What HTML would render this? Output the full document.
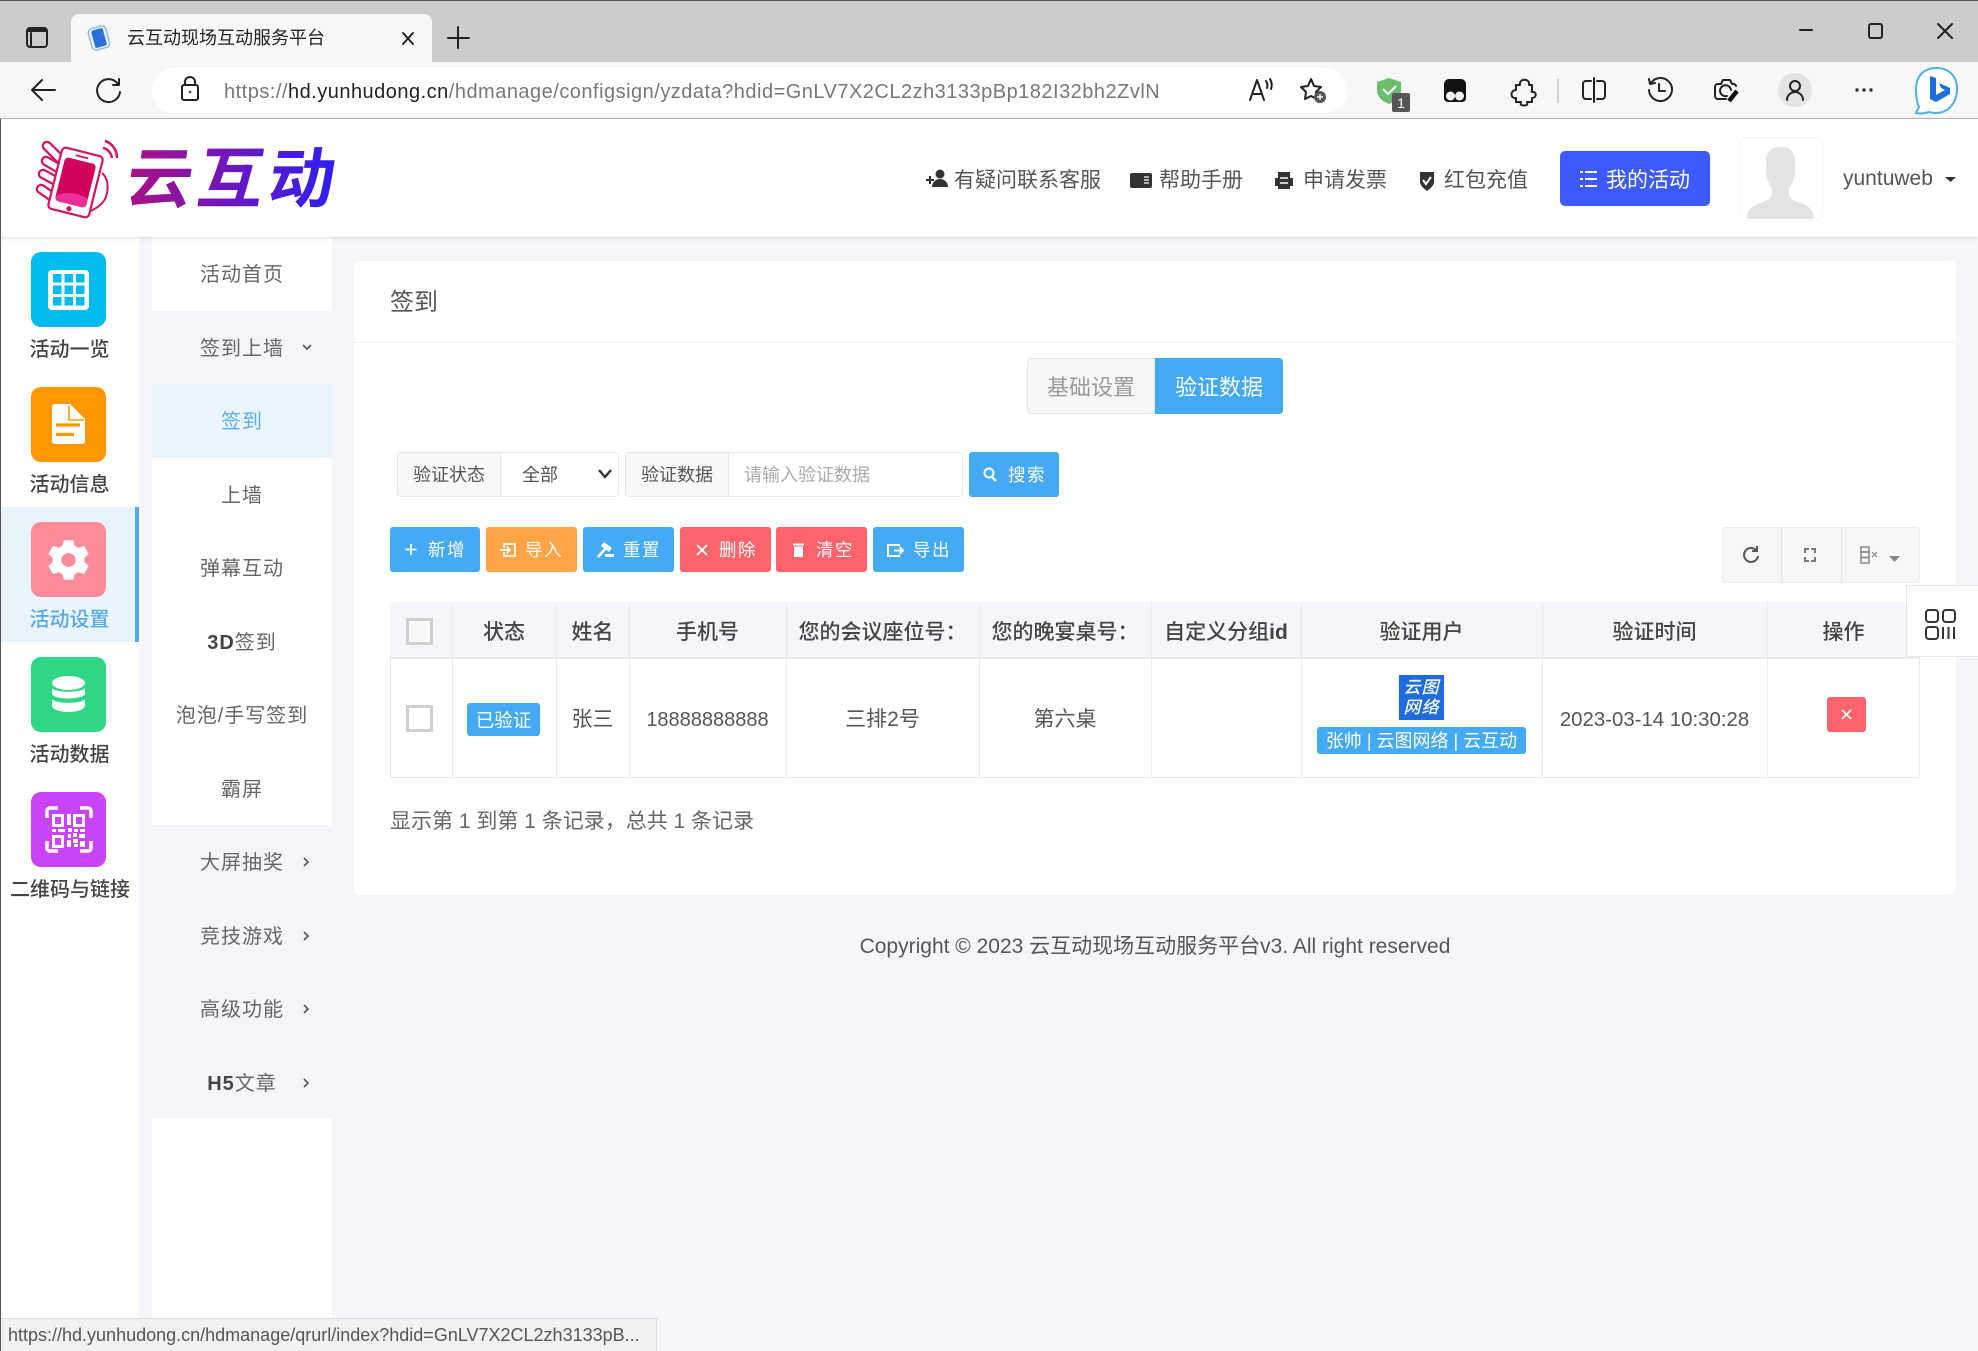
<!DOCTYPE html>
<html lang="zh-CN">
<head>
<meta charset="utf-8">
<title>云互动现场互动服务平台</title>
<style>
*{box-sizing:border-box}
html,body{margin:0;padding:0;width:1978px;height:1351px;overflow:hidden;background:#f4f6fa}
body{position:relative;font-family:"Liberation Sans","Noto Sans CJK SC",sans-serif;color:#555}
.b{position:absolute}
.t{position:absolute;white-space:nowrap;text-align:center;transform:translateY(2px)}
svg{position:absolute;overflow:visible}
.btn{position:absolute;top:527px;height:45px;border-radius:3px;color:#fff;font-size:17.500px;letter-spacing:1.500px;line-height:45px;white-space:nowrap}
.btn span{position:absolute;top:1px}
.btn svg{top:0;left:0}
.n1{left:0;width:139px;height:30px;line-height:30px;font-size:20px;font-weight:500;color:#444}
.n2{left:152px;width:180px;height:73.5px;line-height:73.5px;font-size:20px;letter-spacing:1px;color:#666}
.hd{top:602px;height:57px;line-height:57px;font-size:21px;font-weight:500;color:#444}
.td{top:659px;height:118px;line-height:118px;font-size:21px;color:#555}
.ln{position:absolute;width:1px;background:#eaecef;top:602px;height:176px}
.hl{position:absolute;top:166px;font-size:21px;height:30px;line-height:30px;color:#555;white-space:nowrap}
.i{fill:none;stroke:#222;stroke-width:2;stroke-linecap:round;stroke-linejoin:round}
</style>
</head>
<body>
<!-- browser chrome -->
<div class="b" style="left:0;top:0;width:1978px;height:62px;background:#cccccc;border-top:1px solid #555"></div>
<div class="b" style="left:71px;top:14px;width:361px;height:48px;background:#f7f7f7;border-radius:8px 8px 0 0"></div>
<div class="b" style="left:0;top:62px;width:1978px;height:57px;background:#f7f7f7;border-bottom:1px solid #bbb"></div>
<div class="b" style="left:152px;top:68px;width:1195px;height:45px;background:#fff;border-radius:23px"></div>

<svg style="left:0;top:0" width="1978" height="119" viewBox="0 0 1978 119">
 <!-- sidebar toggle -->
 <rect class="i" x="27" y="28" width="20" height="19" rx="3" stroke-width="2"/>
 <path d="M27 32h20v-1a3 3 0 0 0-3-3H30a3 3 0 0 0-3 3z" fill="#222"/><path class="i" d="M31 33v13"/>
 <!-- favicon -->
 <g transform="rotate(-15 99 38)"><rect x="93" y="29" width="12" height="18" rx="2" fill="#2a6fdb"/><rect x="90" y="27" width="18" height="22" rx="4" fill="none" stroke="#8fb8ea" stroke-width="1.5"/></g>
 <!-- close, new tab -->
 <path class="i" d="M403 33l10 11M413 33l-10 11" stroke-width="1.8"/>
 <path class="i" d="M458 27v21M448 38h21" stroke-width="1.8"/>
 <!-- back / refresh / lock -->
 <path class="i" d="M55 90H32M42 80L32 90l10 10" stroke-width="2"/>
 <path class="i" d="M118 84a11.500 11.500 0 1 0 2 8M119 79v6h-6" stroke-width="2"/>
 <rect class="i" x="182" y="85" width="16" height="15" rx="2" stroke="#555" stroke-width="1.5"/><path class="i" d="M185 85v-3a5 5 0 0 1 10 0v3" stroke="#555" stroke-width="1.5"/><circle cx="190" cy="92" r="1.400" fill="#555"/>
 <!-- read aloud / favorite -->
 <path class="i" d="M1250 100l7-20 7 20M1253 94h8" stroke="#777" stroke-width="1.300"/><path class="i" d="M1266 81a8 8 0 0 1 1 7M1270 79a12 12 0 0 1 1 10" stroke="#777" stroke-width="1.200"/>
 <path class="i" d="M1311 79l3 7 7 1-5 5 1 7-6-3-6 3 1-7-5-5 7-1z" stroke="#666" stroke-width="1.300"/><circle cx="1320" cy="97" r="6" fill="#555"/><path d="M1320 94v6M1317 97h6" stroke="#fff" stroke-width="1.400"/>
 <!-- shield ext -->
 <path d="M1389 78l12 4v8c0 7-5 11-12 14-7-3-12-7-12-14v-8z" fill="#6bbf6b"/><path d="M1383 89l5 5 8-8" fill="none" stroke="#fff" stroke-width="2"/>
 <rect x="1392" y="93" width="18" height="19" rx="2" fill="#555"/><text x="1401" y="108" font-size="14" fill="#fff" text-anchor="middle" font-family="Liberation Sans">1</text>
 <!-- tampermonkey -->
 <path d="M1444 84a5 5 0 0 1 5-5h12a5 5 0 0 1 5 5v14a4 4 0 0 1-4 4h-14a4 4 0 0 1-4-4z" fill="#111"/><circle cx="1450.500" cy="96" r="4.500" fill="#f2f2f2"/><circle cx="1459.500" cy="96" r="4.500" fill="#f2f2f2"/>
 <!-- puzzle -->
 <path class="i" d="M1516 85h4c-1.500-7 10.500-7 9 0h3v5c-.5 1.500-.5 2 0 0v2c5-1 5 6 0 6v4h-5c1 3-.5 3.500-3 3.500s-4-.5-3-3.500h-5v-4c-6 1-6-8 0-8z" stroke-width="1.700"/>
 <path d="M1558 79v24" stroke="#cfcfcf" stroke-width="2"/>
 <!-- split -->
 <path class="i" d="M1591 81h-5a3 3 0 0 0-3 3v12a3 3 0 0 0 3 3h5M1597 81h5a3 3 0 0 1 3 3v12a3 3 0 0 1-3 3h-5M1594 78v24" stroke-width="1.700"/>
 <!-- history -->
 <path class="i" d="M1651 83a11.500 11.500 0 1 1-2 7M1649 79l1 5 5-1M1659 84v7h6" stroke-width="1.700"/>
 <!-- camera -->
 <path class="i" d="M1726 99h-8a3 3 0 0 1-3-3V87a3 3 0 0 1 3-3h3l2-4h7l2 4h2a3 3 0 0 1 2 2M1731 90a5.500 5.500 0 1 0-4 6" stroke-width="1.700"/><path d="M1729 101l8-10" stroke="#111" stroke-width="4.500"/>
 <!-- profile -->
 <circle cx="1795" cy="90" r="17" fill="#e3e3e3"/><circle cx="1795" cy="86" r="5" class="i" stroke="#333" stroke-width="1.300"/><path class="i" d="M1787 100a8 8 0 0 1 16 0" stroke="#333" stroke-width="1.300"/>
 <circle cx="1857" cy="90" r="1.700" fill="#333"/><circle cx="1864" cy="90" r="1.700" fill="#333"/><circle cx="1871" cy="90" r="1.700" fill="#333"/>
 <!-- bing -->
 <path d="M1936 68c-12 0-20 8-20 21 0 8 1 14 3 18l-3 6c5 1 10 0 13-1 3 1 5 1 7 1 12 0 21-10 21-24s-9-21-21-21z" fill="#fff" stroke="#4fb0ee" stroke-width="2"/>
 <path d="M1930 76l6 2v17l9-5-4-2-2-5 11 5v6l-14 8-6-3z" fill="#1c6fd8"/>
 <!-- window -->
 <path class="i" d="M1800 30h12" stroke-width="1.300" stroke="#333"/><rect class="i" x="1869" y="24" width="13" height="14" rx="2" stroke="#333" stroke-width="1.300"/><path class="i" d="M1938 24l14 14M1952 24l-14 14" stroke="#333" stroke-width="1.300"/>
</svg>
<div class="t" style="left:127px;top:24px;width:200px;height:28px;line-height:28px;font-size:18px;color:#222;text-align:left;transform:none">云互动现场互动服务平台</div>
<div class="t" style="left:224px;top:76px;height:28px;line-height:28px;font-size:20px;color:#777;text-align:left;letter-spacing:.49px">https://<span style="color:#222">hd.yunhudong.cn</span>/hdmanage/configsign/yzdata?hdid=GnLV7X2CL2zh3133pBp182I32bh2ZvlN</div>

<!-- page header -->
<div class="b" style="left:0;top:119px;width:1978px;height:118px;background:#fff;box-shadow:0 1px 4px rgba(0,0,0,.15);z-index:3"></div>
<div style="position:absolute;left:0;top:0;z-index:4">
<svg style="left:0;top:0" width="1978" height="240" viewBox="0 0 1978 240">
 <defs><linearGradient id="lg" x1="0" x2="210" y1="0" y2="0" gradientUnits="userSpaceOnUse"><stop offset="0" stop-color="#ad1184"/><stop offset=".5" stop-color="#6a17c0"/><stop offset="1" stop-color="#2a1ff5"/></linearGradient></defs>
 <!-- logo hand and phone -->
 <path d="M102 173c6 5 7 14 4 24-3 7-10 12-18 15" fill="none" stroke="#d6135f" stroke-width="2"/>
 <g stroke-linecap="round" fill="none">
  <g stroke="#d6135f" stroke-width="10.500"><path d="M47 146l12 12"/><path d="M46 161l12 7"/><path d="M43 174l13 7"/><path d="M41 189l13 9"/></g>
  <g stroke="#fff" stroke-width="6"><path d="M47 146l12 12"/><path d="M46 161l12 7"/><path d="M43 174l13 7"/><path d="M41 189l13 9"/></g>
 </g>
 <g transform="rotate(14 75.500 182.500)">
  <rect x="54.500" y="151" width="42" height="63" rx="4" fill="#fff" stroke="#d6135f" stroke-width="2.200"/>
  <rect x="59.500" y="160" width="32" height="45" rx="4" fill="#d1045a"/>
  <path d="M69 156h13" stroke="#d6135f" stroke-width="1.800"/><circle cx="75.500" cy="209.500" r="2.600" fill="#d6135f"/>
  <path d="M59.500 201c6-8 20-9 32-6v6a4 4 0 0 1-4 4h-24a4 4 0 0 1-4-4z" fill="#ec2f96"/>
 </g>
 <path d="M105 141c7 2 12 9 12 17M103 148c5 1 8 5 9 10" fill="none" stroke="#d6135f" stroke-width="2.500"/>
 <text transform="translate(124 202) skewX(-8)" font-family="Noto Sans CJK SC" font-weight="700" font-size="66" letter-spacing="5" fill="url(#lg)">云互动</text>
 <!-- header icons -->
 <g fill="#333">
  <circle cx="940" cy="174" r="4.500"/><path d="M932 187c0-5 4-8 8-8s8 3 8 8z"/><path d="M926 179h8v2h-8zM929 176h2v8h-2z"/>
  <path d="M1132 173h18a2 2 0 0 1 2 2v11a2 2 0 0 1-2 2h-18a2 2 0 0 1-2-2v-11a2 2 0 0 1 2-2z"/>
  <path d="M1278 178v-6h12v6h3v8h-3v3h-12v-3h-3v-8z"/>
  <path d="M1420 172h14v10c0 3-3 6-7 9-4-3-7-6-7-9z"/>
 </g>
 <path d="M1144 177h5M1144 180h5M1144 183h5" stroke="#fff" stroke-width="1.200"/>
 <path d="M1280 178h8M1280 183h8" stroke="#fff" stroke-width="1.500"/>
 <path d="M1423 180l3 4 5-7" fill="none" stroke="#fff" stroke-width="2"/>
 <path d="M1945 177h11l-5.500 5z" fill="#333"/>
</svg>
</div>
<div class="hl" style="left:954px;z-index:5">有疑问联系客服</div>
<div class="hl" style="left:1159px;z-index:5">帮助手册</div>
<div class="hl" style="left:1303px;z-index:5">申请发票</div>
<div class="hl" style="left:1444px;z-index:5">红包充值</div>
<div class="b" style="left:1560px;top:151px;width:150px;height:55px;background:#3d5afe;border-radius:5px;z-index:5"></div>
<svg style="left:1560px;top:151px;z-index:6" width="150" height="55"><path d="M25 21h12M25 28h12M25 35h12" stroke="#fff" stroke-width="2"/><path d="M20 21h3M20 28h3M20 35h3" stroke="#fff" stroke-width="2"/></svg>
<div class="t" style="left:1606px;top:164px;font-size:21px;line-height:30px;height:30px;color:#fff;z-index:6">我的活动</div>
<div class="b" style="left:1739px;top:137px;width:84px;height:84px;border:1px solid #f5f5f5;border-radius:8px;z-index:5;background:#fff"></div>
<svg style="left:1741px;top:137px;z-index:6" width="82" height="84"><path d="M39 10c10 0 15 5 15 14v12c0 7-4 12-6 15v6c0 4 5 7 14 10 8 3 11 8 11 15H6c0-7 3-12 11-15 9-3 14-6 14-10v-6c-2-3-6-8-6-15V24c0-9 5-14 14-14z" fill="#e3e3e3"/></svg>
<div class="t" style="left:1843px;top:162px;font-size:21px;line-height:30px;height:30px;color:#555;z-index:6">yuntuweb</div>

<!-- sidebars -->
<div class="b" style="left:0;top:237px;width:139px;height:1114px;background:#fff"></div>
<div class="b" style="left:0;top:119px;width:1px;height:1232px;background:#555;z-index:9"></div>
<div class="b" style="left:0;top:507px;width:139px;height:135px;background:#eaf4fd;border-right:4px solid #55a8ee"></div>

<svg style="left:31px;top:252px" width="75" height="75"><rect width="75" height="75" rx="10" fill="#00bcf1"/><rect x="17" y="18" width="41" height="40" rx="4" fill="#fff"/><g fill="#00bcf1"><rect x="22" y="22" width="8.500" height="8.500"/><rect x="33.500" y="22" width="8.500" height="8.500"/><rect x="45" y="22" width="8.500" height="8.500"/><rect x="22" y="33.500" width="8.500" height="8.500"/><rect x="33.500" y="33.500" width="8.500" height="8.500"/><rect x="45" y="33.500" width="8.500" height="8.500"/><rect x="22" y="45" width="8.500" height="8.500"/><rect x="33.500" y="45" width="8.500" height="8.500"/><rect x="45" y="45" width="8.500" height="8.500"/></g></svg>
<div class="t n1" style="top:333px">活动一览</div>

<svg style="left:31px;top:387px" width="75" height="75"><rect width="75" height="75" rx="10" fill="#ff9800"/><path d="M24 17h15l15 15v22a3 3 0 0 1-3 3H24a3 3 0 0 1-3-3V20a3 3 0 0 1 3-3z" fill="#fff"/><path d="M38 18.500V33h15" fill="none" stroke="#ff9800" stroke-width="1.600"/><path d="M25 38h24M25 47.500h18" stroke="#ff9800" stroke-width="3.200"/></svg>
<div class="t n1" style="top:468px">活动信息</div>

<svg style="left:31px;top:522px" width="75" height="75"><rect width="75" height="75" rx="10" fill="#ff8a9a"/><g transform="translate(37.500 38) scale(.72) translate(-37.500 -37.500)"><path fill="#fff" fill-rule="evenodd" d="M31 10h13l2 8 5 2.500 8-2.500 6.500 11-6 5.500v6l6 5.500-6.500 11-8-2.500-5 2.500-2 8H31l-2-8-5-2.500-8 2.500-6.500-11 6-5.500v-6l-6-5.500 6.500-11 8 2.500 5-2.500zM37.500 28a10 9.500 0 1 0 .01 0z"/></g></svg>
<div class="t n1" style="top:603px;color:#55a8ee">活动设置</div>

<svg style="left:31px;top:657px" width="75" height="75"><rect width="75" height="75" rx="10" fill="#2fd684"/><ellipse cx="37.500" cy="26" rx="16.500" ry="7" fill="#fff"/><path d="M21 31c3 5 30 5 33 0v6c-2 6-31 6-33 0zM21 42c3 5 30 5 33 0v7c-2 8-31 8-33 0z" fill="#fff"/></svg>
<div class="t n1" style="top:738px">活动数据</div>

<svg style="left:31px;top:792px" width="75" height="75"><rect width="75" height="75" rx="10" fill="#c944f6"/><path d="M16 26v-7a3 3 0 0 1 3-3h8M60 26v-7a3 3 0 0 0-3-3h-8M16 49v7a3 3 0 0 0 3 3h8M60 49v7a3 3 0 0 1-3 3h-8" fill="none" stroke="#fff" stroke-width="3.500"/><path d="M22.500 23.500h9v10h-9zM43.500 23.500h9v10h-9zM22.500 44.500h9v10h-9z" fill="none" stroke="#fff" stroke-width="3"/><path d="M36 22h4v11h-4zM21 37h4v3h-4zM27 37h7v3h-7zM37 36h4v4h-4zM43 37h4v3h-4zM49 37h5v3h-5zM37 42h3v4h-3zM42 41h4v4h-4zM48 42h6v4h-6zM36 48h4v7h-4zM42 47h5v4h-5zM49 49h5v6h-5zM43 52h4v3h-4z" fill="#fff"/></svg>
<div class="t n1" style="top:873px;left:0;width:140px">二维码与链接</div>

<div class="b" style="left:152px;top:237px;width:180px;height:1114px;background:#fff"></div>
<div class="b" style="left:152px;top:310.500px;width:180px;height:74px;background:#f3f5f8"></div>
<div class="b" style="left:152px;top:384px;width:180px;height:74px;background:#ebf5fd"></div>
<div class="b" style="left:152px;top:825px;width:180px;height:293px;background:#f3f5f8"></div>
<div class="t n2" style="top:237px">活动首页</div>
<div class="t n2" style="top:311px">签到上墙</div>
<div class="t n2" style="top:384px;color:#5aaeee">签到</div>
<div class="t n2" style="top:458px">上墙</div>
<div class="t n2" style="top:531px">弹幕互动</div>
<div class="t n2" style="top:605px"><b style="color:#444">3D</b>签到</div>
<div class="t n2" style="top:678px">泡泡/手写签到</div>
<div class="t n2" style="top:752px">霸屏</div>
<div class="t n2" style="top:825px">大屏抽奖</div>
<div class="t n2" style="top:899px">竞技游戏</div>
<div class="t n2" style="top:972px">高级功能</div>
<div class="t n2" style="top:1046px"><b style="color:#444">H5</b>文章</div>
<svg style="left:0;top:0" width="340" height="1100"><g fill="none" stroke="#555" stroke-width="1.600"><path d="M303 345l4 4 4-4"/><path d="M304 858l4 4-4 4"/><path d="M304 932l4 4-4 4"/><path d="M304 1005l4 4-4 4"/><path d="M304 1079l4 4-4 4"/></g></svg>

<!-- main card -->
<div class="b" style="left:354px;top:261px;width:1602px;height:634px;background:#fff;border-radius:6px"></div>
<div class="t" style="left:390px;top:286px;font-size:24px;line-height:30px;height:30px;color:#555">签到</div>
<div class="b" style="left:354px;top:342px;width:1602px;height:1px;background:#f3f3f4"></div>

<div class="b" style="left:1027px;top:358px;width:128px;height:56px;background:#f6f6f6;border:1px solid #e6e6e6;border-radius:4px 0 0 4px;text-align:center;line-height:58px;font-size:22px;color:#999">基础设置</div>
<div class="b" style="left:1155px;top:358px;width:128px;height:56px;background:#45aaf5;border-radius:0 4px 4px 0;text-align:center;line-height:60px;font-size:22px;color:#fff">验证数据</div>

<!-- filter -->
<div class="b" style="left:397px;top:452px;width:222px;height:45px;background:#fff;border:1px solid #e5e6e7;border-radius:4px"></div>
<div class="b" style="left:398px;top:453px;width:103px;height:43px;background:#f8f8f9;border-right:1px solid #e5e6e7;border-radius:4px 0 0 4px;text-align:center;line-height:45px;font-size:18px;color:#555">验证状态</div>
<div class="t" style="left:522px;top:452px;height:43px;line-height:43px;font-size:18px;color:#555">全部</div>
<svg style="left:598px;top:468px" width="14" height="12"><path d="M1 2l6 7 6-7" fill="none" stroke="#333" stroke-width="2.400"/></svg>
<div class="b" style="left:625px;top:452px;width:338px;height:45px;background:#fff;border:1px solid #e5e6e7;border-radius:4px"></div>
<div class="b" style="left:626px;top:453px;width:103px;height:43px;background:#f8f8f9;border-right:1px solid #e5e6e7;border-radius:4px 0 0 4px;text-align:center;line-height:45px;font-size:18px;color:#555">验证数据</div>
<div class="t" style="left:744px;top:452px;height:43px;line-height:43px;font-size:18px;color:#aaa">请输入验证数据</div>
<div class="btn" style="left:969px;top:452px;width:90px;background:#45aaf5"><svg width="90" height="45"><circle cx="20" cy="21" r="4.500" fill="none" stroke="#fff" stroke-width="2"/><path d="M23 25l4 4" stroke="#fff" stroke-width="2.400"/></svg><span style="left:39px">搜索</span></div>

<!-- toolbar -->
<div class="btn" style="left:390px;width:90px;background:#45aaf5"><svg width="90" height="45"><path d="M21 17v11M15.500 22.500h11" stroke="#fff" stroke-width="1.800"/></svg><span style="left:38px">新增</span></div>
<div class="btn" style="left:486px;width:91px;background:#ffa548"><svg width="91" height="45"><path d="M18 21v-4h11v12H18v-4M14 23h10M20.500 19.500l3.500 3.500-3.500 3.500" fill="none" stroke="#fff" stroke-width="1.700"/></svg><span style="left:39px">导入</span></div>
<div class="btn" style="left:583px;width:91px;background:#45aaf5"><svg width="91" height="45"><path d="M15 30l8-9" stroke="#fff" stroke-width="2.600"/><path d="M21 15l8 6-3 4-8-6zM22 27h9v3h-9z" fill="#fff"/></svg><span style="left:40px">重置</span></div>
<div class="btn" style="left:680px;width:91px;background:#ff646c"><svg width="91" height="45"><path d="M17 18l10 10M27 18l-10 10" stroke="#fff" stroke-width="1.800"/></svg><span style="left:39px">删除</span></div>
<div class="btn" style="left:776px;width:91px;background:#ff646c"><svg width="91" height="45"><path d="M18 19.500h9V30h-9zM17 16.500h11v2H17z" fill="#fff"/></svg><span style="left:40px">清空</span></div>
<div class="btn" style="left:873px;width:91px;background:#45aaf5"><svg width="91" height="45"><path d="M27 18H15v11h12" fill="none" stroke="#fff" stroke-width="2"/><path d="M21 23.500h9M26.500 20l3.500 3.500-3.500 3.500" fill="none" stroke="#fff" stroke-width="2"/></svg><span style="left:40px">导出</span></div>

<!-- toolbar right -->
<div class="b" style="left:1722px;top:527px;width:198px;height:56px;background:#f7f7f7;border:1px solid #ececec;border-radius:4px"></div>
<div class="b" style="left:1781px;top:527px;width:1px;height:56px;background:#e6e6e6"></div>
<div class="b" style="left:1841px;top:527px;width:1px;height:56px;background:#e6e6e6"></div>
<svg style="left:1722px;top:527px" width="198" height="56">
 <path d="M34 23a7 7 0 1 0 2 6M35 19v5h-5" fill="none" stroke="#555" stroke-width="2"/>
 <path d="M83 26v-4h4M89 22h4v4M93 30v4h-4M87 34h-4v-4" fill="none" stroke="#777" stroke-width="2"/>
 <rect x="139" y="20" width="8" height="5" fill="none" stroke="#888" stroke-width="1.500"/><rect x="139" y="25" width="8" height="5.500" fill="none" stroke="#888" stroke-width="1.500"/><rect x="139" y="30.500" width="8" height="5.500" fill="none" stroke="#888" stroke-width="1.500"/><path d="M150 25l5 5M155 25l-5 5" stroke="#888" stroke-width="1.200"/>
 <path d="M167 29h11l-5.500 6z" fill="#888"/>
</svg>

<!-- table -->
<div class="b" style="left:390px;top:602px;width:1530px;height:176px;background:#fff;border:1px solid #e9ebee"></div>
<div class="b" style="left:390px;top:602px;width:1530px;height:57px;background:#f4f6f9;border-bottom:2px solid #e9ebee"></div>
<div class="ln" style="left:452px"></div><div class="ln" style="left:556px"></div><div class="ln" style="left:629px"></div><div class="ln" style="left:786px"></div><div class="ln" style="left:979px"></div><div class="ln" style="left:1151px"></div><div class="ln" style="left:1301px"></div><div class="ln" style="left:1542px"></div><div class="ln" style="left:1767px"></div>
<div class="b" style="left:406px;top:618px;width:27px;height:27px;border:3px solid #cfcfcf;background:#f8f8f8"></div>
<div class="b" style="left:406px;top:705px;width:27px;height:27px;border:3px solid #cfcfcf;background:#fff"></div>
<div class="t hd" style="left:452px;width:104px">状态</div>
<div class="t hd" style="left:556px;width:73px">姓名</div>
<div class="t hd" style="left:629px;width:157px">手机号</div>
<div class="t hd" style="left:786px;width:193px">您的会议座位号：</div>
<div class="t hd" style="left:979px;width:172px">您的晚宴桌号：</div>
<div class="t hd" style="left:1151px;width:150px">自定义分组<b>id</b></div>
<div class="t hd" style="left:1301px;width:241px">验证用户</div>
<div class="t hd" style="left:1542px;width:225px">验证时间</div>
<div class="t hd" style="left:1767px;width:153px">操作</div>

<div class="b" style="left:467px;top:703px;width:73px;height:33px;background:#45aaf5;border-radius:3px;color:#fff;font-size:18.500px;line-height:35px;text-align:center">已验证</div>
<div class="t td" style="left:556px;width:73px">张三</div>
<div class="t td" style="left:629px;width:157px;font-size:20px">18888888888</div>
<div class="t td" style="left:786px;width:193px">三排2号</div>
<div class="t td" style="left:979px;width:172px">第六桌</div>
<div class="b" style="left:1399px;top:675px;width:45px;height:45px;background:#1f6be0;color:#fff;font-size:17px;line-height:20px;text-align:center;font-style:italic;font-weight:500;padding-top:3px;letter-spacing:1px">云图<br>网络</div>
<div class="b" style="left:1317px;top:727px;width:209px;height:27px;background:#45aaf5;border-radius:3px;color:#fff;font-size:18px;line-height:29px;text-align:center;white-space:nowrap">张帅 | 云图网络 | 云互动</div>
<div class="t td" style="left:1542px;width:225px;font-size:20.400px">2023-03-14 10:30:28</div>
<div class="b" style="left:1827px;top:697px;width:39px;height:35px;background:#ff646c;border-radius:3px"></div>
<svg style="left:1827px;top:697px" width="39" height="35"><path d="M15 13l9 9M24 13l-9 9" stroke="#fff" stroke-width="1.800"/></svg>

<!-- side float -->
<div class="b" style="left:1906px;top:585px;width:72px;height:72px;background:#fff;border:1px solid #e6e6e6;border-right:none;z-index:5"></div>
<svg style="left:1906px;top:585px;z-index:6" width="72" height="72" fill="none" stroke="#333" stroke-width="2"><rect x="20" y="25" width="12" height="12" rx="3"/><rect x="37" y="25" width="12" height="12" rx="3"/><rect x="20" y="42" width="12" height="12" rx="3"/><path d="M37 42v12M42.500 42v12M48 42v12"/></svg>

<div class="t" style="left:390px;top:805px;height:30px;line-height:30px;font-size:21px;color:#666">显示第 1 到第 1 条记录，总共 1 条记录</div>
<div class="t" style="left:354px;width:1602px;top:930px;height:30px;line-height:30px;font-size:21px;color:#555">Copyright © 2023 云互动现场互动服务平台v3. All right reserved</div>

<!-- status bubble -->
<div class="b" style="left:0;top:1318px;width:657px;height:33px;background:#f1f1f1;border-top:1px solid #dedede;border-right:1px solid #dedede;z-index:8;font-size:18px;line-height:32px;color:#555;padding-left:8px;white-space:nowrap;overflow:hidden">https://hd.yunhudong.cn/hdmanage/qrurl/index?hdid=GnLV7X2CL2zh3133pB...</div>
</body>
</html>
